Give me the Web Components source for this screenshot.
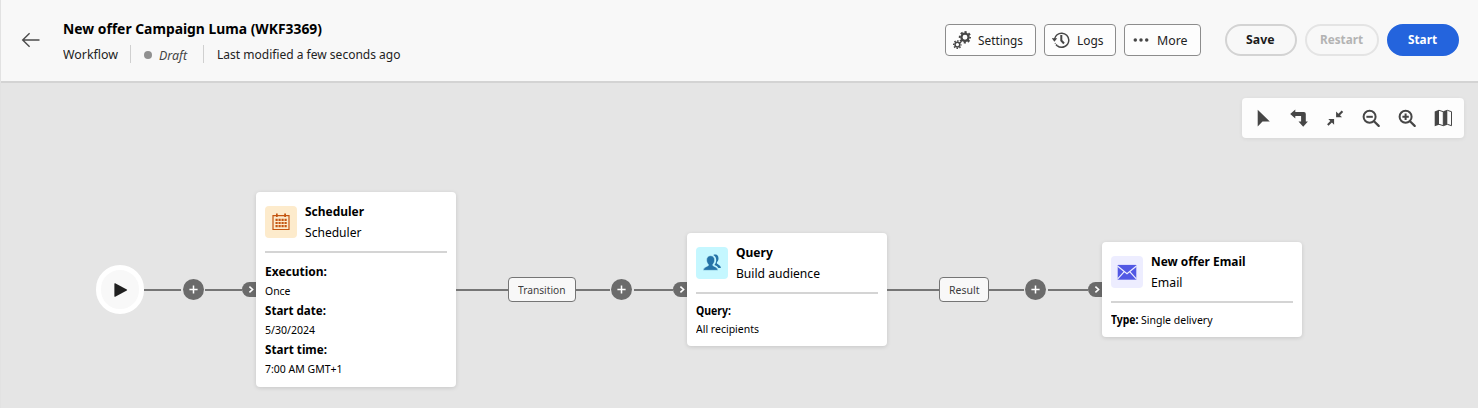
<!DOCTYPE html>
<html lang="en">
<head>
<meta charset="utf-8">
<title>New offer Campaign Luma</title>
<style>
html,body{margin:0;height:100%}
body{font-family:"Noto Sans","Open Sans",sans-serif;background:#e5e5e5;color:#000;overflow:hidden}
</style>
</head>
<body>
<workflow-page></workflow-page>
<script>
const define = (name, html, connected) => {
  const t = document.createElement('template');
  t.innerHTML = html;
  customElements.define(name, class extends HTMLElement {
    connectedCallback() {
      if (this.shadowRoot) return;
      this.attachShadow({mode: 'open'}).append(t.content.cloneNode(true));
      if (connected) connected.call(this, this.shadowRoot);
    }
  });
};

const icons = {
  back: [20, 16, '<path d="M18.5 8H1.8M8.6 1.3 1.7 8l6.9 6.7" fill="none" stroke="#4b4b4b" stroke-width="1.4"/>'],
  gears: [18, 18, '<g fill="none" stroke="#464646"><circle cx="12" cy="6.300" r="3.600" stroke-width="2.300"/><circle cx="12" cy="6.300" r="5.200" stroke-width="2" stroke-dasharray="2.200 1.884" stroke-dashoffset="1.100"/><circle cx="4.400" cy="13.600" r="2.400" stroke-width="1.500"/><circle cx="4.400" cy="13.600" r="3.700" stroke-width="1.500" stroke-dasharray="1.500 1.406" stroke-dashoffset=".75"/></g>'],
  history: [18, 18, '<path d="M2.500 8.200A7.200 7.200 0 0 1 16.800 9a7.200 7.200 0 0 1-11.700 5.600" fill="none" stroke="#464646" stroke-width="1.500"/><path d="M-.2 7.300h5.400L2.400 10.800z" fill="#464646"/><path d="M5.100 14.600a7.200 7.200 0 0 1-1.900-2.500" fill="none" stroke="#464646" stroke-width="1.500" stroke-dasharray="1.500 1"/><path d="M9.300 4v5.500l2.700 3" fill="none" stroke="#464646" stroke-width="2"/>'],
  more: [18, 18, '<g fill="#464646"><circle cx="3.300" cy="9" r="1.750"/><circle cx="9" cy="9" r="1.750"/><circle cx="14.700" cy="9" r="1.750"/></g>'],
  pointer: [18, 18, '<path d="M3.700.8v16.700l4.800-5.100h7.300z" fill="#464646"/>'],
  turn: [18, 18, '<path d="M.2 5 5.300.6V3h8.600q1.900 0 1.900 1.900v7.600h2.100L13.200 17.800l-4.700-5.300h2.600V7H5.300v2.400z" fill="#464646"/>'],
  collapse: [18, 18, '<path d="M10.100 2.500v5.700H16l-2-2 3.200-3.300-1.500-1.500-3.300 3.300zM8.100 15.800V10H2.300l2 2-3.200 3.300 1.400 1.400 3.400-3.200z" fill="#464646"/>'],
  zoomout: [18, 18, '<g fill="none" stroke="#464646"><circle cx="7.600" cy="7.800" r="6" stroke-width="2"/><path d="m12 12.200 4.700 4.700" stroke-width="2.200" stroke-linecap="round"/><path d="M4.400 7.800h6.400" stroke-width="2"/></g>'],
  zoomin: [18, 18, '<g fill="none" stroke="#464646"><circle cx="7.600" cy="7.800" r="6" stroke-width="2"/><path d="m12 12.200 4.700 4.700" stroke-width="2.200" stroke-linecap="round"/><path d="M4.400 7.800h6.400M7.600 4.600V11" stroke-width="2"/></g>'],
  map: [18, 18, '<path d="M.7 2.400 5 .8v15L.7 17.200zM9.300 2.200l4-1.400v15l-4 1.400z" fill="#464646"/><path d="m5 1.300 4.300 1.400v14L5 15.300M13.300 1.300l4.200 1.400v14l-4.200-1.400" fill="none" stroke="#464646"/>'],
  calendar: [18, 18, '<g fill="#c45510"><path d="M4 .5h1.700v3.600H4zM12.200.5H14v3.600h-1.800z"/><path d="M3.500 5.800h2.200V8H3.500zm3 0h2.200V8H6.500zm3 0h2.200V8H9.500zm3 0h2.200V8h-2.200zM3.500 8.900h2.200v2.200H3.500zm3 0h2.200v2.200H6.500zm3 0h2.200v2.200H9.500zm3 0h2.200v2.200h-2.200zM3.500 12h2.200v2.200H3.500zm3 0h2.200v2.200H6.500zm3 0h2.200v2.200H9.500zm3 0h2.200v2.200h-2.200z"/></g><path d="M1 2.700h16v13.800H1z" fill="none" stroke="#c45510" stroke-width="1.200"/>'],
  people: [18, 18, '<g fill="#2573a8"><path d="M10.300 1.100C10.900.7 11.500.6 12 .6c2.300 0 3.500 1.600 3.500 3.800 0 1.700-.8 3-1.600 3.800v1.300c.4.800 3.800 1.400 4 4.500h-2.500c-.8-1.600-2.500-2.400-4-3 .9-1.100 1.800-2.800 1.800-5 0-2-1-3.900-2.900-4.900z"/><path d="M7.600 1.700c2.600 0 4 1.800 4 4.300 0 1.900-.8 3.500-1.800 4.400v1.100c.2.800 4.900 1.300 5.200 4.800H.2c.3-3.500 5-4 5.200-4.800v-1.100C4.400 9.500 3.600 7.900 3.600 6c0-2.500 1.400-4.300 4-4.300z" stroke="#c5f7ff" stroke-width=".5"/></g>'],
  mail: [20, 18, '<path d="M.7 1.900h18.600v14.800H.7z" fill="#5258e4"/><path d="m.5 3 9.500 7.700L19.500 3M.7 15.800l6.600-7.200M19.300 15.800l-6.600-7.200" fill="none" stroke="#ededff" stroke-width="1.200"/>'],
  play: [16, 18, '<path d="M2.400 2.700v12.600q0 .8.800.4L14.800 9.600q.8-.6 0-1.200L3.200 2.300q-.8-.4-.8.400z" fill="#1f1f1f"/>'],
  plus: [21, 21, '<circle cx="10.500" cy="10.500" r="10.500" fill="#6b6b6b"/><path d="M6.400 10.500h8.200M10.500 6.400v8.200" stroke="#fff" stroke-width="1.500"/>'],
  handle: [14, 15, '<path d="M14 0v15H7.500a7.500 7.500 0 0 1 0-15z" fill="#6b6b6b"/><path d="m7.400 4.600 3.200 2.900-3.200 2.900" fill="none" stroke="#fff" stroke-width="1.600"/>']
};

define('ui-icon', '<style>:host{display:block;flex:none}svg{display:block}</style>', function (r) {
  const [w, h, body] = icons[this.getAttribute('name')];
  r.innerHTML += `<svg width="${w}" height="${h}" viewBox="0 0 ${w} ${h}">${body}</svg>`;
});

define('workflow-page', `
<style>
:host{display:flex;flex-direction:column;height:100vh;box-sizing:border-box;border-left:1px solid #e2e2e2}
.tools{display:flex;justify-content:flex-end;padding:15px 14px 0 0;height:40px}
.flow{display:flex;align-items:center;height:196px;margin-top:53.500px;padding-left:94.500px}
</style>
<page-header></page-header>
<div class="tools"><canvas-tools></canvas-tools></div>
<div class="flow">
  <start-node></start-node>
  <flow-link style="--width:112px" first></flow-link>
  <activity-card icon="calendar" style="--tile:#fdebcc;--h:195px">
    <fit-text slot="title" w="59">Scheduler</fit-text>
    <fit-text slot="label" w="56.500">Scheduler</fit-text>
    <detail-list>
      <fit-text class="key" w="62">Execution:</fit-text><fit-text class="val" w="25.500">Once</fit-text>
      <fit-text class="key" w="61">Start date:</fit-text><fit-text class="val" w="50">5/30/2024</fit-text>
      <fit-text class="key" w="62">Start time:</fit-text><fit-text class="val" w="77.500">7:00 AM GMT+1</fit-text>
    </detail-list>
  </activity-card>
  <flow-link style="--width:231.300px;--box:68px;--out:39.500px"><fit-text w="47.500">Transition</fit-text></flow-link>
  <activity-card icon="people" style="--tile:#c5f7ff;--h:113.500px">
    <fit-text slot="title" w="36.800">Query</fit-text>
    <fit-text slot="label" w="84">Build audience</fit-text>
    <detail-list small><fit-text class="key" w="35">Query:</fit-text><fit-text class="val" w="63">All recipients</fit-text></detail-list>
  </activity-card>
  <flow-link style="--width:214.300px;--box:50px;--out:40px"><fit-text w="30.500">Result</fit-text></flow-link>
  <activity-card icon="mail" style="--tile:#ededff;--h:95.500px">
    <fit-text slot="title" w="94.500">New offer Email</fit-text>
    <fit-text slot="label" w="31.500">Email</fit-text>
    <detail-list small inline><fit-text class="key" w="27.500">Type:</fit-text><fit-text class="val" w="71.500">Single delivery</fit-text></detail-list>
  </activity-card>
</div>`);

define('page-header', `
<style>
:host{display:flex;align-items:flex-start;box-sizing:border-box;height:83px;background:#f8f8f8;border-bottom:2px solid #d3d3d3;padding-right:19px}
.back{margin:32px 0 0 20px}
.info{margin:19px 0 0 22px;flex:1}
.title{font-size:14px;font-weight:700;line-height:20px}
.meta{display:flex;align-items:center;height:18px;margin-top:6px;font-size:13px;line-height:18px;color:#222}
.sep{width:1px;height:18px;background:#d0d0d0}
.dot{width:8px;height:8px;border-radius:50%;background:#909090;margin:1px 7px 0 13px}
.draft{font-style:italic;color:#444;margin:1px 16px 0 0}
.actions{display:flex;gap:8px;margin-top:24px}
.cta{display:flex;gap:8px;margin-left:16px}
</style>
<ui-icon class="back" name="back"></ui-icon>
<div class="info">
  <fit-text class="title" w="259">New offer Campaign Luma (WKF3369)</fit-text>
  <div class="meta">
    <fit-text w="55" style="margin-right:12px">Workflow</fit-text><i class="sep"></i>
    <i class="dot"></i><fit-text class="draft" w="28">Draft</fit-text><i class="sep"></i>
    <fit-text w="183.500" style="margin-left:13px">Last modified a few seconds ago</fit-text>
  </div>
</div>
<div class="actions">
  <tool-button style="--w:91px"><ui-icon name="gears"></ui-icon><fit-text w="45">Settings</fit-text></tool-button>
  <tool-button style="--w:72px"><ui-icon name="history"></ui-icon><fit-text w="26.500">Logs</fit-text></tool-button>
  <tool-button style="--w:77px"><ui-icon name="more"></ui-icon><fit-text w="30.500">More</fit-text></tool-button>
  <div class="cta">
    <pill-button style="--w:72px"><fit-text w="28.500">Save</fit-text></pill-button>
    <pill-button style="--w:74px;--line:#e4e4e4;--ink:#b3b3b3"><fit-text w="43">Restart</fit-text></pill-button>
    <pill-button style="--w:72px;--line:#2464dd;--fill:#2464dd;--ink:#fff"><fit-text w="29">Start</fit-text></pill-button>
  </div>
</div>`);

define('tool-button', `
<style>
:host{display:flex;align-items:center;box-sizing:border-box;width:var(--w);height:32px;border:1px solid #8c8c8c;border-radius:4px;background:#fdfdfd;padding-left:7px;gap:7px;font-size:13px;line-height:18px;color:#222}
</style><slot></slot>`);

define('pill-button', `
<style>
:host{display:flex;align-items:center;justify-content:center;box-sizing:border-box;width:var(--w);height:32px;border:2px solid var(--line,#d3d3d3);border-radius:16px;background:var(--fill,transparent);color:var(--ink,#1c1c1c);font-size:13px;font-weight:700;line-height:18px;padding:0 1px 2px 0}
</style><slot></slot>`);

define('canvas-tools', `
<style>
:host{display:flex;align-items:center;box-sizing:border-box;width:222px;height:40px;padding-left:12px;gap:18px;background:#fdfdfd;border-radius:4px;box-shadow:0 1px 4px #0001}
</style>
<ui-icon name="pointer"></ui-icon><ui-icon name="turn"></ui-icon><ui-icon name="collapse"></ui-icon>
<ui-icon name="zoomout"></ui-icon><ui-icon name="zoomin"></ui-icon><ui-icon name="map"></ui-icon>`);

define('start-node', `
<style>
:host{display:flex;align-items:center;justify-content:center;flex:none;box-sizing:border-box;width:48.500px;height:48.500px;border:5px solid #fff;border-radius:50%;background:#f8f8f8}
</style><ui-icon name="play"></ui-icon>`);

define('flow-link', `
<style>
:host{display:flex;align-items:center;flex:none;width:var(--width);font-size:11.500px;line-height:16px;color:#3c3c3c}
:host([first]) .box,:host([first]) .in{display:none}
.line{height:2px;background:#757575}
.in{width:52px}
.mid{flex:1;margin-right:1.500px}
.out{width:var(--out,37px);margin-left:1.500px}
.box{display:flex;align-items:center;justify-content:center;box-sizing:border-box;width:var(--box);height:24.500px;border:1px solid #757575;border-radius:4px;background:#f8f8f8}
</style>
<i class="line in"></i><div class="box"><slot></slot></div><i class="line mid"></i>
<ui-icon name="plus"></ui-icon><i class="line out"></i><ui-icon name="handle"></ui-icon>`);

define('activity-card', `
<style>
:host{display:block;flex:none;box-sizing:border-box;width:200px;height:var(--h);padding:14px 9px 0;background:#fff;border-radius:4px;box-shadow:0 1px 4px #0002}
.head{display:flex;gap:8px;height:45px;border-bottom:2px solid #d4d4d4}
.tile{display:flex;align-items:center;justify-content:center;width:32px;height:32px;border-radius:4px;background:var(--tile)}
.names{margin-top:-5px;font-size:13px;line-height:21px}
slot[name=title]{font-weight:700}
</style>
<div class="head"><div class="tile"></div><div class="names"><slot name="title"></slot><slot name="label"></slot></div></div>
<slot></slot>`, function (r) {
  r.querySelector('.tile').innerHTML = `<ui-icon name="${this.getAttribute('icon')}"></ui-icon>`;
});

define('detail-list', `
<style>
:host{display:block;padding-top:9px;font-size:11.500px;line-height:19.500px}
::slotted(.key){font-weight:700;font-size:13px}
::slotted(.val){margin:-.7px 0 .7px}
:host([small]){line-height:18px;padding-top:8.300px}
:host([small]) ::slotted(.key){font-size:11.500px}
:host([small]) ::slotted(.val){margin:0}
:host([inline]){display:flex;gap:3px}
</style><slot></slot>`);

/* Text set to a fixed measure: its glyphs are condensed to the width in "w". */
define('fit-text', `
<style>:host{display:block;flex:none;white-space:nowrap}span{display:inline-block;transform-origin:0 50%;vertical-align:top}</style><span><slot></slot></span>`, function (r) {
  const w = parseFloat(this.getAttribute('w')), s = r.querySelector('span');
  this.style.width = w + 'px';
  s.style.transform = `scaleX(${w / s.getBoundingClientRect().width})`;
});
</script>
</body>
</html>
